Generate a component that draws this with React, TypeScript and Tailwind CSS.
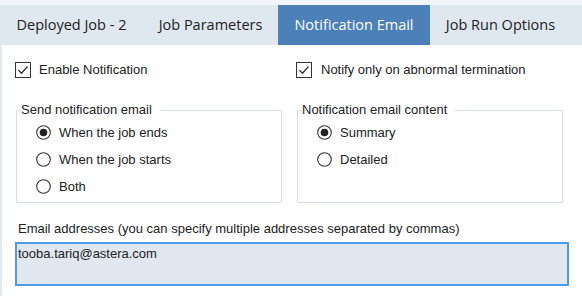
import React from "react";

const Check = () => (
  <svg width="16" height="16" viewBox="0 0 16 16" className="shrink-0">
    <rect x="0.5" y="0.5" width="15" height="15" fill="#fff" stroke="#333" />
    <path d="M3.5 8.2 L6.5 11.2 L12.5 4.5" fill="none" stroke="#333" strokeWidth="1.3" />
  </svg>
);

const Radio = ({ on }: { on?: boolean }) => (
  <svg width="15" height="15" viewBox="0 0 15 15" className="shrink-0">
    <circle cx="7.5" cy="7.5" r="6.8" fill="#fff" stroke="#333" strokeWidth="1.1" />
    {on && <circle cx="7.5" cy="7.5" r="3.8" fill="#222" />}
  </svg>
);

const tabFont = { fontFamily: '"Open Sans", "Noto Sans", sans-serif' };

export default function App() {
  return (
    <div
      className="w-[582px] h-[296px] bg-white overflow-hidden text-[13px] text-[#222]"
      style={{ fontFamily: '"Liberation Sans", Arial, sans-serif' }}
    >
      <div className="h-[5px] bg-[#f1f5f9]" />
      <div className="h-[40px] bg-[#dfe7ef] flex items-stretch text-[14.5px] text-[#222]" style={tabFont}>
        <div className="w-[143px] flex items-center justify-center">Deployed Job - 2</div>
        <div className="w-[135px] flex items-center justify-center">Job Parameters</div>
        <div className="w-[152px] bg-[#4b80b8] text-white flex items-center justify-center">Notification Email</div>
        <div className="w-[141px] flex items-center justify-center">Job Run Options</div>
      </div>
      <div className="h-[251px] border-l-2 border-[#e3e8ee] pl-[13px] pt-[17px] pr-[12px]">
        <div className="flex h-[16px]">
          <div className="w-[281px] flex items-center gap-[8px]">
            <Check />
            <span>Enable Notification</span>
          </div>
          <div className="flex items-center gap-[9px]">
            <Check />
            <span>Notify only on abnormal termination</span>
          </div>
        </div>
        <div className="flex mt-[32px] gap-[15px] pl-[1px]">
          {[
            { title: "Send notification email", items: ["When the job ends", "When the job starts", "Both"] },
            { title: "Notification email content", items: ["Summary", "Detailed"] },
          ].map((g) => (
            <div key={g.title} className="relative w-[266px] h-[93px] border border-[#d6dde6] rounded-[1px]">
              <div className="absolute left-[4px] -top-[10px] bg-white pr-[8px] leading-[18px]">{g.title}</div>
              <div className="pl-[19px] pt-[14px] flex flex-col gap-[12px]">
                {g.items.map((it, i) => (
                  <div key={it} className="flex items-center gap-[8px] h-[15px]">
                    <Radio on={i === 0} />
                    <span>{it}</span>
                  </div>
                ))}
              </div>
            </div>
          ))}
        </div>
        <div className="mt-[17px] pl-[3px] leading-[18px]">
          Email addresses (you can specify multiple addresses separated by commas)
        </div>
        <div className="mt-[4px] w-[554px] h-[44px] bg-[#e0e7ef] border-2 border-[#4f9ce6] px-[1px] pt-[2px] leading-[16px]">
          tooba.tariq@astera.com
        </div>
      </div>
    </div>
  );
}
